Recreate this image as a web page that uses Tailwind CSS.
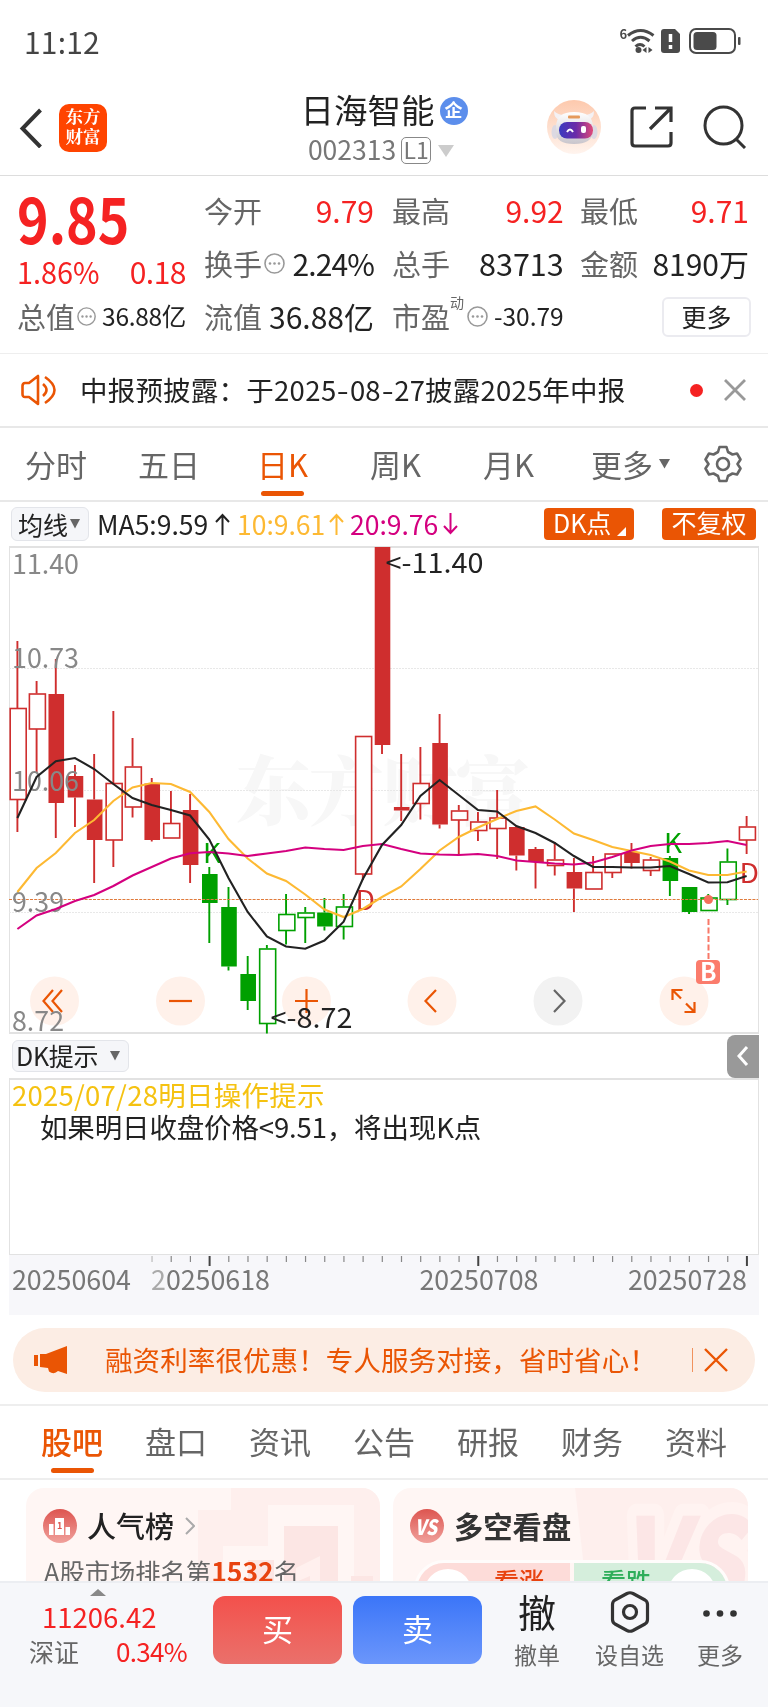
<!DOCTYPE html>
<html lang="zh-CN">
<head>
  <meta charset="UTF-8">
  <meta name="viewport" content="width=device-width, initial-scale=1.0">
  <title>日海智能 002313</title>
  <script src="https://cdn.jsdelivr.net/npm/@tailwindcss/browser@4"></script>
</head>
<body class="w-[768px] h-[1707px] overflow-hidden bg-white text-[#222] font-['Noto_Sans_CJK_SC',sans-serif] flex flex-col whitespace-nowrap">

  <!-- Status bar -->
  <div class="h-[82px] shrink-0 flex items-center justify-between pl-6 pr-[27px] text-[#444]">
    <span class="text-[30px] leading-[44px] tracking-[.2px]">11:12</span>
    <svg width="122" height="30" viewBox="619 26 122 30" fill="none" stroke="#4a4a4a">
      <text x="619.5" y="39" font-size="13" font-weight="700" fill="#4a4a4a" stroke="none">6</text>
      <g stroke-width="3">
        <path d="M628 35.500Q640.500 25.500 653.500 35.500"/>
        <path d="M632 41Q640.500 33.500 649.500 41"/>
        <path d="M635.500 46.500Q640 42.500 644.500 46.500"/>
      </g>
      <circle cx="638.500" cy="50" r="3" fill="#4a4a4a" stroke="none"/>
      <path d="M642.500 50l4-3v6zM652.500 50l-4-3v6z" fill="#4a4a4a" stroke="none"/>
      <path d="M664 29h11l5 5v16q0 3-3 3h-13q-3 0-3-3V32q0-3 3-3z" fill="#4a4a4a" stroke="none"/>
      <path d="M670.500 34v8M670.500 45v4" stroke="#fff" stroke-width="3.500"/>
      <rect x="690" y="29" width="45" height="24" rx="6" stroke-width="2"/>
      <rect x="693.500" y="32" width="23" height="18" rx="3.500" fill="#4a4a4a" stroke="none"/>
      <rect x="738" y="37" width="2.500" height="8" rx="1" fill="#4a4a4a" stroke="none"/>
    </svg>
  </div>

  <!-- Header -->
  <header class="h-[94px] shrink-0 border-b border-[#ddd] flex items-start justify-between pl-[19px] pr-[21px]">
    <div class="flex items-center gap-4 pt-[22px] w-[210px]">
      <svg width="24" height="40" viewBox="0 0 24 40" fill="none" stroke="#333" stroke-width="4"><path d="M21.500 2L3.500 20.500L21.500 39"/></svg>
      <div class="size-12 rounded-[10px] bg-[#ff4400] text-white font-bold text-[17.5px] leading-[20px] text-center pt-[2px] font-['Noto_Serif_CJK_SC','Noto_Sans_CJK_SC',serif]">东方<br>财富</div>
    </div>
    <div class="flex flex-col items-center pt-[8px] w-[200px] mr-[30px]">
      <div class="flex items-center gap-[5px] pl-[22px]">
        <h1 class="text-[33.500px] leading-[38px]">日海智能</h1>
        <span class="size-7 rounded-full bg-[#5c8eec] text-white text-[18px] font-bold leading-[25px] text-center mt-1">企</span>
      </div>
      <div class="flex items-center mt-[6px] pl-4">
        <span class="text-[26.500px] leading-[30px] text-[#777]">002313</span>
        <span class="border border-[#888] rounded-[5px] text-[#777] text-[23px] leading-[22px] h-[27px] w-[30px] text-center ml-[5px] mt-[3px]">L1</span>
        <svg class="ml-[7px] mt-[3px]" width="16" height="12"><path d="M0 0H16L8 12Z" fill="#ccc"/></svg>
      </div>
    </div>
    <div class="flex items-center pt-[18px]">
      <svg width="54" height="54" viewBox="0 0 54 54">
        <defs>
          <linearGradient id="halo" x2="0" y2="1"><stop stop-color="#fdc9ad"/><stop offset="1" stop-color="#fff4ee"/></linearGradient>
          <linearGradient id="visor"><stop stop-color="#3a3bc0"/><stop offset=".5" stop-color="#6a2aa8"/><stop offset="1" stop-color="#e04a78"/></linearGradient>
          <linearGradient id="shell" x2="0" y2="1"><stop stop-color="#fff"/><stop offset="1" stop-color="#c9c5cc"/></linearGradient>
        </defs>
        <circle cx="27" cy="27" r="27" fill="url(#halo)"/>
        <path d="M7 11q0 8 6 9l4-5q-6 0-10-4zM47 11q0 8-6 9l-4-5q6 0 10-4z" fill="#f4f1f4"/>
        <ellipse cx="8" cy="32" rx="3.500" ry="7" fill="#dcd9e2"/><ellipse cx="47" cy="32" rx="3.500" ry="7" fill="#dcd9e2"/>
        <path d="M9 27Q9 12 27 12Q46 12 46 27V32Q45 44 27 44Q9 44 9 32Z" fill="url(#shell)"/>
        <rect x="12" y="22" width="34" height="16.500" rx="8" fill="url(#visor)"/>
        <rect x="21" y="15.500" width="12" height="3" rx="1" fill="#e59a5c"/>
        <path d="M20 32q3-5 6 0" fill="none" stroke="#fff" stroke-width="2"/>
        <rect x="34" y="26" width="5" height="7" rx="2" fill="#fff"/>
      </svg>
      <svg class="ml-7" width="44" height="44" viewBox="0 0 44 44" fill="none" stroke="#333" stroke-width="3.200">
        <path d="M17 3H6Q3 3 3 6V38Q3 41 6 41H39Q42 41 42 38V27M26 3H42V17M42 3L21 24"/>
      </svg>
      <svg class="ml-[30px]" width="44" height="44" viewBox="0 0 44 44" fill="none" stroke="#333" stroke-width="3">
        <circle cx="20.500" cy="20.500" r="18.500"/><path d="M33 34L42 43"/>
      </svg>
    </div>
  </header>

  <!-- Quote -->
  <section class="h-[178px] shrink-0 border-b border-[#eee] flex gap-[18px] pt-2 pl-[17px] text-[29px]">
    <div class="w-[169px] flex flex-col text-[#f52222]">
      <div class="h-16 leading-[66px] text-[62px] font-bold origin-left scale-x-[.865]">9.85</div>
      <div class="h-[46px] flex items-center justify-between text-[30px]"><span class="origin-left scale-x-[.96]">1.86%</span><span class="tracking-[-.5px]">0.18</span></div>
      <div class="h-[45px] flex items-center text-[#666]">
        <span>总值</span>
        <svg class="ml-[2px] mr-[6px]" width="21" height="21"><use href="#info"/></svg>
        <span class="text-[24.500px] text-[#222] tracking-[-.3px]">36.88亿</span>
      </div>
    </div>
    <div class="w-[170px] grid grid-rows-3 h-[159px] text-[#666]">
      <div class="flex items-center justify-between"><span>今开</span><span class="text-[#f52222] text-[30px]">9.79</span></div>
      <div class="flex items-center"><span>换手</span><svg class="ml-[2px]" width="21" height="21"><use href="#info"/></svg><span class="ml-auto text-[#222] text-[30px] tracking-[-.9px]">2.24%</span></div>
      <div class="flex items-center justify-between"><span>流值</span><span class="text-[#222] text-[30px]">36.88亿</span></div>
    </div>
    <div class="w-[170px] grid grid-rows-3 h-[159px] text-[#666]">
      <div class="flex items-center justify-between"><span>最高</span><span class="text-[#f52222] text-[30px]">9.92</span></div>
      <div class="flex items-center justify-between"><span>总手</span><span class="text-[#222] text-[30.500px]">83713</span></div>
      <div class="flex items-center"><span>市盈</span><span class="text-[14px] -mt-7">动</span><svg class="ml-[3px] mr-[6px]" width="21" height="21"><use href="#info"/></svg><span class="text-[24.500px] text-[#222]">-30.79</span></div>
    </div>
    <div class="w-[169px] grid grid-rows-3 h-[159px] text-[#666]">
      <div class="flex items-center justify-between"><span>最低</span><span class="text-[#f52222] text-[30px]">9.71</span></div>
      <div class="flex items-center justify-between"><span>金额</span><span class="text-[#222] text-[30px]">8190万</span></div>
      <div class="flex items-center justify-end"><button class="h-10 w-[89px] -mr-[2px] border-2 border-[#ebebf0] rounded-md text-[25px] leading-[33px] text-[#222]">更多</button></div>
    </div>
  </section>

  <!-- Notice -->
  <section class="h-[74px] shrink-0 border-b-2 border-[#e8e8e8] flex items-center pl-[21px] pr-[22px]">
    <svg width="37" height="32" viewBox="0 0 37 32" fill="none" stroke="#ea5504" stroke-width="2.600" stroke-linejoin="round">
      <path d="M17 2V30L8 23H4Q1.500 23 1.500 20V12Q1.500 9 4 9H8ZM22 10Q29 16 22 22M24 3Q43 16 24 29"/>
    </svg>
    <span class="text-[27.500px] leading-[40px] tracking-[.2px] ml-[22px] -mt-[3px]">中报预披露：于<span class="tracking-[.4px]">2025</span><span class="inline-block scale-x-[1.25] mx-[1.800px]">-</span>08<span class="inline-block scale-x-[1.25] mx-[1.800px]">-</span>27披露2025年中报</span>
    <span class="size-[13px] rounded-full bg-[#f52222] ml-auto mr-[21px]"></span>
    <svg width="22" height="22" stroke="#999" stroke-width="2.800"><path d="M1 1L21 21M21 1L1 21"/></svg>
  </section>

  <!-- Period tabs -->
  <nav class="h-[74px] shrink-0 border-b-2 border-[#e8e8e8] flex items-center text-[31px] leading-[60px] text-[#666] pl-[25px]">
    <span class="w-[113px]">分时</span>
    <span class="w-[119px]">五日</span>
    <span class="w-[113px] text-[#ea5504] relative">日K<i class="absolute left-[4px] bottom-[-2px] w-[43px] h-[5px] rounded-full bg-[#ea5504]"></i></span>
    <span class="w-[113px]">周K</span>
    <span class="w-[108px]">月K</span>
    <span>更多</span>
    <svg class="ml-[6px]" width="11" height="10"><path d="M0 0H11L5.500 9.500Z" fill="#666"/></svg>
    <svg class="ml-[34px]" width="38" height="38" viewBox="0 0 38 38" fill="none" stroke="#666" stroke-width="2.600" stroke-linejoin="round">
      <path d="M15.500 2H22.500L24 7L28.500 9.500L33 8.500L36.500 14.500L33.500 19L36.500 23.500L33 29.500L28.500 28.500L24 31L22.500 36H15.500L14 31L9.500 28.500L5 29.500L1.500 23.500L4.500 19L1.500 14.500L5 8.500L9.500 9.500L14 7Z"/>
      <circle cx="19" cy="19" r="6"/>
    </svg>
  </nav>

  <!-- Moving averages -->
  <div class="h-[44px] shrink-0 flex items-center text-[26.500px] leading-[34px] pl-[11px] pr-3 pb-px">
    <div class="w-[78px] h-[34px] rounded-md border border-[#e3e5ea] bg-[#f5f6f9] flex items-center pl-[6px] gap-[2px] text-[25px]"><span>均线</span><svg width="10" height="10"><path d="M0 0H10L5 9.500Z" fill="#666"/></svg></div>
    <span class="ml-[8px] w-[140px] flex items-center gap-[7px]">MA5:9.59<svg width="15" height="22" fill="none" stroke="#222" stroke-width="2"><path d="M7.500 22V2M1 9L7.500 2L14 9"/></svg></span>
    <span class="w-[113px] flex items-center gap-[4px] text-[#fdb933]">10:9.61<svg width="15" height="22" fill="none" stroke="#fdb933" stroke-width="2"><path d="M7.500 22V2M1 9L7.500 2L14 9"/></svg></span>
    <span class="flex items-center gap-[5px] text-[#d4007f]">20:9.76<svg width="15" height="22" fill="none" stroke="#d4007f" stroke-width="2"><path d="M7.500 0V20M1 13L7.500 20L14 13"/></svg></span>
    <span class="ml-auto w-[90px] h-8 rounded bg-[#ea5504] text-white text-[25px] leading-[29px] pl-[9px] flex">DK点<svg class="mt-[19px] ml-[6px]" width="9" height="9"><path d="M9 0V9H0Z" fill="#fff"/></svg></span>
    <span class="ml-[28px] w-[94px] h-8 rounded bg-[#ea5504] text-white text-[25px] leading-[29px] text-center">不复权</span>
  </div>

  <!-- Candlestick chart, filled in by the script below -->
  <svg id="kline" class="shrink-0 block" width="768" height="488" viewBox="0 546 768 488"></svg>

  <!-- DK hint -->
  <div class="h-[44px] shrink-0 flex items-center justify-between pl-[12px] pr-[9px]">
    <div class="w-[117px] h-8 rounded-md border border-[#e3e5ea] bg-[#f5f6f9] flex items-center pl-[3px] pb-[2px] text-[25px] leading-[30px] tracking-[-.3px]"><span>DK提示</span><svg class="ml-[12px] mt-[2px]" width="10" height="10"><path d="M0 0H10L5 9.500Z" fill="#666"/></svg></div>
    <div class="w-8 h-[43px] rounded-l-lg bg-[#999] flex items-center justify-center"><svg width="12" height="20" fill="none" stroke="#fff" stroke-width="3"><path d="M10 1L2 10L10 19"/></svg></div>
  </div>
  <div class="h-[177px] shrink-0 mx-[9px] border border-[#e2e2e2] border-t-2 pl-[2px] text-[27.500px] leading-[33px]">
    <p class="text-[#f5c211] -mt-[2px] tracking-[.25px]">2025/07/28明日操作提示</p>
    <p class="pl-7 tracking-[-.15px] -mt-px">如果明日收盘价格&lt;9.51，将出现K点</p>
  </div>
  <div class="h-[60px] shrink-0 mx-[9px] bg-[#f7f7fa]">
    <svg id="axis" class="block" width="750" height="60" viewBox="9 1255 750 60"></svg>
  </div>

  <!-- Promo banner -->
  <div class="h-[64px] shrink-0 mt-[13px] ml-[13px] w-[742px] rounded-full bg-[#fcede4] text-[#ea5504] flex items-center pl-[21px] pr-[27px]">
    <svg width="34" height="30" viewBox="0 0 34 30" fill="#ea5504"><path d="M0 10H4V21H0ZM6 9H12L33 1V29L24 26Q20 30 15 26.500L14 23L6 22Z"/></svg>
    <span class="ml-[37px] text-[27.600px] leading-[40px] -mt-[3px]">融资利率很优惠！专人服务对接，省时省心！</span>
    <i class="ml-auto w-px h-6 bg-[#ea5504]/60"></i>
    <svg class="ml-[11px]" width="24" height="24" stroke="#ea5504" stroke-width="2.400"><path d="M1 1L23 23M23 1L1 23"/></svg>
  </div>

  <!-- Content tabs -->
  <nav class="h-[76px] shrink-0 mt-[12px] border-y-2 border-[#eee] flex items-center pl-[41px] pb-[2px] text-[31px] leading-[60px] text-[#666]">
    <span class="w-[104px] text-[#ea5504] font-medium relative">股吧<i class="absolute left-[10px] bottom-[-2px] w-[43px] h-[5px] rounded-full bg-[#ea5504]"></i></span>
    <span class="w-[104px]">盘口</span>
    <span class="w-[104px]">资讯</span>
    <span class="w-[104px]">公告</span>
    <span class="w-[104px]">研报</span>
    <span class="w-[104px]">财务</span>
    <span>资料</span>
  </nav>

  <!-- Cards, cut off by the trade bar -->
  <div class="h-[101px] shrink-0 overflow-hidden flex gap-[13px] pt-[8px] pl-[26px]">
    <div class="w-[354px] h-[160px] rounded-[18px] bg-[#fff6f4] relative overflow-hidden">
      <svg class="absolute inset-0" width="354" height="160">
        <path d="M205 0H354V160H172V22H205Z" fill="#feefed"/>
        <path d="M242 17H328V160H197V58H242Z" fill="#fff6f4"/>
        <path d="M258 38H312V160H258ZM222 72H248V160H222ZM325 88H347V160H325Z" fill="#fce6e4"/>
        <path d="M270 80L294 68V160H284V88L270 94Z" fill="#fff0ee"/>
      </svg>
      <div class="relative flex items-center pl-[17px] pt-[19px]">
        <svg width="34" height="34" viewBox="0 0 34 34">
          <defs><linearGradient id="badge" x2="0" y2="1"><stop stop-color="#dd5550"/><stop offset="1" stop-color="#f0a09b"/></linearGradient></defs>
          <circle cx="17" cy="17" r="17" fill="url(#badge)"/>
          <path d="M6 15H10.500V26H6ZM12 9H21V26H12ZM22.500 18H27V26H22.500Z" fill="#fff"/>
          <text x="14" y="20" font-size="9" font-weight="700" fill="#dd5550">1</text>
        </svg>
        <b class="ml-[10px] text-[29px] leading-[38px] font-medium text-[#222] -mt-px">人气榜</b>
        <svg class="ml-[11px]" width="10" height="18" fill="none" stroke="#aaa" stroke-width="2"><path d="M1 1L9 9L1 17"/></svg>
      </div>
      <p class="relative pl-[18px] mt-[9px] text-[25.300px] leading-[36px] text-[#666]">A股市场排名第<b class="text-[#e8430f] text-[26.500px]">1532</b>名</p>
    </div>
    <div class="w-[355px] h-[160px] rounded-[18px] bg-[#fff6f4] relative overflow-hidden">
      <svg class="absolute inset-0" width="355" height="160">
        <path d="M182 0H355V160H200Z" fill="#feefed"/>
        <text x="226" y="120" font-size="124" font-weight="900" font-style="italic" fill="#fce6e6" stroke="#fff3f1" stroke-width="24" stroke-linejoin="round" paint-order="stroke" textLength="124" lengthAdjust="spacingAndGlyphs">VS</text>
      </svg>
      <div class="relative flex items-center pl-[17px] pt-[19px]">
        <svg width="34" height="34" viewBox="0 0 34 34">
          <circle cx="17" cy="17" r="17" fill="url(#badge)"/>
          <text x="5" y="25.500" font-size="21" font-weight="900" font-style="italic" fill="#fff" textLength="22" lengthAdjust="spacingAndGlyphs">VS</text>
        </svg>
        <b class="ml-[10px] text-[29.300px] leading-[38px] font-bold text-[#333] -mt-px">多空看盘</b>
      </div>
      <div class="relative mt-[16px] ml-[21px] w-[316px] h-[60px] rounded-full border-[3px] border-[#fffcfb] flex gap-1 overflow-hidden text-[25px] leading-[30px] font-medium">
        <div class="w-[153px] bg-[#fddcd9] text-[#e8430f] pl-[77px] pt-[2px] relative"><i class="absolute left-[7px] top-[6px] size-[48px] rounded-full bg-white"></i><span>看涨</span></div>
        <div class="w-[153px] bg-[#d5eedc] text-[#2fae5b] pl-[27px] pt-[2px] relative"><i class="absolute right-[11px] top-[6px] size-[48px] rounded-full bg-white"></i><span>看跌</span></div>
      </div>
    </div>
  </div>

  <!-- Trade bar -->
  <footer class="h-[126px] shrink-0 border-t-2 border-[#eceef2] bg-[#f6f7fa] flex items-start">
    <div class="w-[213px] pt-[6px] text-[#f52222]">
      <svg class="ml-[90px]" width="16" height="7"><path d="M0 7L8 0L16 7Z" fill="#888"/></svg>
      <p class="pl-[42px] mt-1 text-[27.500px] leading-[32px]">11206.42</p>
      <p class="pl-[29px] pr-[26px] flex justify-between text-[25px] leading-[38px]"><span class="text-[#666]">深证</span><span class="text-[26px] tracking-[-.7px]">0.34%</span></p>
    </div>
    <button class="mt-[13px] w-[129px] h-[68px] rounded-xl bg-linear-to-b from-[#f3504b] to-[#ea706b] text-white text-[31px] leading-[60px] pb-1">买</button>
    <button class="mt-[13px] ml-[11px] w-[129px] h-[68px] rounded-xl bg-linear-to-b from-[#3b75f8] to-[#6b96fb] text-white text-[31px] leading-[60px] pb-1">卖</button>
    <div class="ml-[32px] w-[46px] flex flex-col items-center text-[23px] leading-[32px] text-[#666]">
      <span class="h-[54px] text-[38px] leading-[56px] text-[#222]">撤</span><span class="mt-px">撤单</span>
    </div>
    <div class="ml-[35px] w-[69px] flex flex-col items-center text-[23px] leading-[32px] text-[#666]">
      <svg class="mt-[8px] mb-[5px]" width="40" height="42" viewBox="0 0 40 42" fill="none" stroke="#333" stroke-width="3.200" stroke-linejoin="round"><path d="M17 2.500Q20 1 23 2.500L35 9Q37.500 10.500 37.500 13.500V28.500Q37.500 31.500 35 33L23 39.500Q20 41 17 39.500L5 33Q2.500 31.500 2.500 28.500V13.500Q2.500 10.500 5 9Z"/><circle cx="20" cy="21" r="6.500"/></svg>
      <span>设自选</span>
    </div>
    <div class="ml-[33px] w-[46px] flex flex-col items-center text-[23px] leading-[32px] text-[#666]">
      <svg class="mt-[27px] mb-[21px]" width="34" height="7" fill="#333"><circle cx="3.500" cy="3.500" r="3.300"/><circle cx="17" cy="3.500" r="3.300"/><circle cx="30.500" cy="3.500" r="3.300"/></svg>
      <span>更多</span>
    </div>
  </footer>

  <svg class="hidden">
    <symbol id="info" viewBox="0 0 21 21">
      <circle cx="10.500" cy="10.500" r="9.500" fill="none" stroke="#999" stroke-width="1.600"/>
      <circle cx="6" cy="10.500" r="1.300" fill="#999"/><circle cx="10.500" cy="10.500" r="1.300" fill="#999"/><circle cx="15" cy="10.500" r="1.300" fill="#999"/>
    </symbol>
  </svg>

  <script>
    const STEP = 19.19;
    const x = i => 17.4 + STEP * i;

    // [type, high, top, bottom, low]; r = red, g = green, upper case = filled
    const candles = [
      ['r', 641, 708, 799.5, 832], ['r', 681, 693.5, 729, 773], ['R', 659, 694, 803, 838],
      ['R', 765, 776, 797.5, 827], ['R', 754, 799.5, 840, 883], ['r', 711, 783, 840, 867],
      ['r', 738, 766.5, 807, 817.5], ['R', 778, 783.5, 840, 841.5], ['r', 791, 823, 838, 838],
      ['R', 794, 810, 865, 883], ['G', 867, 874, 903, 943], ['G', 887, 907, 966.5, 970.5],
      ['G', 956, 974, 1001, 1010], ['g', 945, 948.5, 1023.5, 1033.5], ['g', 894, 914, 930.5, 944.5],
      ['g', 907, 912.5, 917.5, 943], ['G', 898, 912.5, 926.5, 930.5], ['g', 894, 906.5, 926.5, 939.5],
      ['r', 736, 736, 874, 880], ['R', 547, 547, 745, 754], ['R', 754, 807, 810.5, 821],
      ['r', 747, 783, 803.5, 819.5], ['R', 714, 743, 824.5, 828.5], ['r', 805, 810.5, 820, 854],
      ['r', 812, 821.5, 830.5, 841], ['r', 790, 817.5, 828.5, 859], ['R', 826, 827, 855.5, 870.5],
      ['R', 847, 849, 862, 888.5], ['r', 842, 859.5, 865.5, 875.5], ['R', 858, 872, 888.5, 912],
      ['r', 856, 872, 889, 889], ['r', 853.5, 853.5, 872.5, 878], ['R', 843, 852, 863, 868.5],
      ['r', 857, 859.5, 870.5, 876], ['G', 856, 858, 881, 896], ['G', 887, 887, 912, 914],
      ['g', 894, 897.5, 910.5, 910.5], ['g', 848.5, 861.5, 899.5, 905], ['r', 816, 826.5, 840, 854]
    ];
    const ma = {
      '#fdb933': [892, 868, 853, 833, 820, 801, 787.5, 783, 784, 792, 812, 839, 858.5, 873.5, 881, 894.5, 909.5, 917, 909, 897, 886.5, 869, 850.5, 837, 827.5, 819, 811, 806.5, 819.5, 833.5, 840, 847, 851, 855, 861.5, 870.5, 875, 875, 871.5],
      '#d4007f': [929, 915.5, 909, 901, 895, 886, 875.5, 867, 858.5, 853.3, 852, 853.5, 856, 853.5, 851, 847.5, 849, 850, 846, 844, 849, 853.5, 854.5, 855, 854, 856, 860.5, 862, 863.5, 864.5, 862.5, 857, 850.5, 846, 844, 844, 843, 841, 845],
      '#222': [818, 777, 761.3, 758, 769, 784, 798, 805, 810, 815.5, 839.5, 878, 912, 936.5, 946.5, 948.7, 940.5, 921.7, 879, 845, 825, 796, 780, 795, 810, 811.5, 826, 833, 843, 856, 867, 867, 867.5, 867.5, 866, 874, 882.5, 882.3, 876]
    };
    const RED = '#cf2e2e', GREEN = '#00a000';

    const text = (tx, ty, str, w, fill, extra = '') =>
      `<text x="${tx}" y="${ty}" font-size="27.5" fill="${fill}" textLength="${w}" lengthAdjust="spacingAndGlyphs" ${extra}>${str}</text>`;

    let s = `<text x="236" y="819" font-size="75" font-weight="900" fill="#f7f7f7" textLength="294" font-family="Noto Serif CJK SC, Noto Sans CJK SC">东方财富</text>`;
    s += `<path d="M9 547H759M9 1033H759" stroke="#e2e2e2" stroke-width="2"/><path d="M9.500 547V1033M758.500 547V1033" stroke="#e2e2e2"/>`;
    s += `<path d="M9 668.500H758M9 790.500H758M9 912.500H758" stroke="#e8e8e8" stroke-dasharray="2 1"/>`;
    candles.forEach(([t, hi, top, bot, lo], i) => {
      const filled = t === t.toUpperCase(), c = t.toLowerCase() === 'r' ? RED : GREEN, cx = x(i);
      s += `<path d="M${cx} ${hi}V${top}M${cx} ${bot}V${lo}" stroke="${c}" stroke-width="1.9"/>`;
      s += filled
        ? `<rect x="${cx - 7.3}" y="${top}" width="15.6" height="${bot - top}" fill="${c}"/>`
        : `<rect x="${cx - 7.2}" y="${top + .5}" width="16" height="${bot - top - .5}" fill="#fff" stroke="${c}" stroke-width="1.6"/>`;
    });
    s += `<path d="M9 899.500H758" stroke="#e07b3c" stroke-width="1.2" stroke-dasharray="3 1.200"/>`;
    // zoom and pan buttons
    [[54.5, 'M53 990L43.500 1001L53 1012M62 990L52.500 1001L62 1012'], [180.5, 'M169 1001H192'], [306.5, 'M295 1001H318M306.500 989V1013'],
     [432, 'M436 990L425.500 1001L436 1012'], [558, 'M554 990L564.500 1001L554 1012'],
     [684, 'M672.500 1000V990H682.500M672.500 990L681 998.500M694.500 1002V1012H684.500M694.500 1012L686 1003.500']].forEach(([cx, d]) => {
      const off = cx === 558;
      s += `<circle cx="${cx}" cy="1001" r="24.5" fill="${off ? '#f2f2f2' : '#fff1ea'}" style="mix-blend-mode:multiply"/><path d="${d}" fill="none" stroke="${off ? '#666' : '#ea5504'}" stroke-width="2.200"/>`;
    });
    [['11.40', 574, 67], ['10.73', 668, 67], ['10.06', 790.5, 67], ['9.39', 912, 52], ['8.72', 1030.5, 52]].forEach(([v, y, w]) => s += text(12, y, v, w, '#888'));
    s += text(203, 863, 'K', 18, GREEN) + text(664, 852.5, 'K', 18, GREEN) + text(355.5, 909.5, 'D', 19.5, RED) + text(739.5, 882.5, 'D', 19.5, RED);
    for (const [c, ys] of Object.entries(ma))
      s += `<polyline points="${ys.map((y, i) => x(i) + ',' + y).join(' ')}" fill="none" stroke="${c}" stroke-width="2.100"/>`;
    s += text(385.5, 572.5, '&lt;-11.40', 98, '#222') + text(270.5, 1027.5, '&lt;-8.72', 82, '#222');
    s += `<circle cx="708.5" cy="899.5" r="4.5" fill="#f5705c"/><path d="M708.500 919V960" stroke="#f87868" stroke-width="2" stroke-dasharray="6 2.500"/>`;
    s += `<rect x="696" y="960" width="24" height="24" rx="4" fill="#fb7c6c"/><text x="700" y="981" font-size="25" font-weight="700" fill="#fff" textLength="16.5" lengthAdjust="spacingAndGlyphs">B</text>`;
    document.getElementById('kline').innerHTML = s;

    // time axis: ticks fade in behind the first date
    let a = '';
    for (let i = 7; i <= 38; i++) {
      const major = i === 10 || i === 24 || i === 38;
      a += `<path d="M${x(i) + .3} 1256v${major ? 10 : 6}" stroke="${major ? '#444' : i < 8 ? '#bbb' : '#888'}" stroke-width="${major ? 2 : 1.2}"/>`;
    }
    a += text(12, 1290, '20250604', 119, '#777') + text(151, 1290, '<tspan fill="#aaa">2</tspan>0250618', 119, '#777');
    a += text(419.5, 1290, '20250708', 119, '#777') + text(628, 1290, '20250728', 119, '#777');
    document.getElementById('axis').innerHTML = a;
  </script>
</body>
</html>
